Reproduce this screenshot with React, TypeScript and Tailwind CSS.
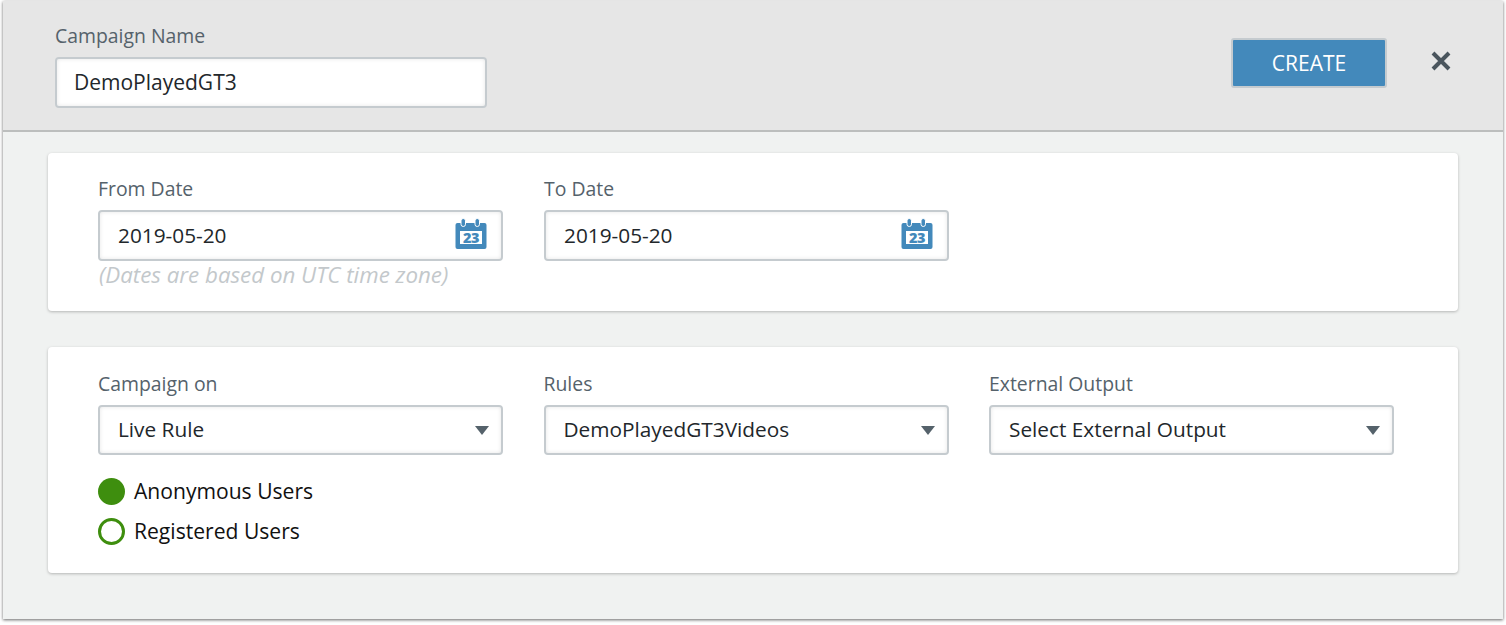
const fieldClass =
  "flex w-[405px] items-center justify-between rounded-[4px] border-2 border-[#c5cbcf] bg-white pl-[18px] text-[20.8px] text-[#22272b] shadow-[inset_0_0_4px_rgba(0,0,0,0.1)]";

const CalendarIcon = () => (
  <svg width="32" height="32" viewBox="0 0 32 32" className="mr-[14px] mt-[-4px]">
    <rect x="0.5" y="5" width="31" height="26" rx="2" fill="#4389bb" />
    <rect x="6" y="0.5" width="4.5" height="8" rx="2.25" fill="#4389bb" stroke="#fff" strokeWidth="1" />
    <rect x="20" y="0.5" width="4.5" height="8" rx="2.25" fill="#4389bb" stroke="#fff" strokeWidth="1" />
    <rect x="5" y="13" width="22" height="13" fill="#fff" />
    <text x="16" y="25" textAnchor="middle" fontSize="14.5" fontWeight="800" letterSpacing="-0.5" fill="#4389bb" fontFamily="'Open Sans', sans-serif">23</text>
  </svg>
);

const DateField = ({ label, value }: { label: string; value: string }) => (
  <div>
    <div className="mb-[9px] text-[19.4px] leading-[25px] text-[#55626b]">{label}</div>
    <div className={`h-[51px] ${fieldClass}`}>
      <span>{value}</span>
      <CalendarIcon />
    </div>
  </div>
);

const SelectField = ({ label, value }: { label: string; value: string }) => (
  <div>
    <div className="mb-[9px] text-[19.4px] leading-[25px] text-[#55626b]">{label}</div>
    <div className={`h-[50px] ${fieldClass}`}>
      <span>{value}</span>
      <svg width="14" height="9" viewBox="0 0 14 9" className="mr-[12px]">
        <path d="M0 0h14L7 9z" fill="#55626b" />
      </svg>
    </div>
  </div>
);

const Radio = ({ label, checked }: { label: string; checked?: boolean }) => (
  <div className="flex h-[40px] items-center gap-[9px] text-[21.1px] text-[#111111]">
    <span
      className={
        checked
          ? "h-[27px] w-[27px] rounded-full bg-[#3e8e0e]"
          : "h-[27px] w-[27px] rounded-full border-[3px] border-[#3e8e0e] bg-white"
      }
    />
    {label}
  </div>
);

export default function App() {
  return (
    <div className="h-[625px] w-[1506px] bg-white font-['Open_Sans',sans-serif]">
      <div className="ml-[3px] w-[1500px] pt-[1px]">
        <div className="h-[618px] bg-[#f0f2f1] shadow-[0_1px_3px_rgba(0,0,0,0.6)]">
          {/* Header */}
          <header className="flex h-[131px] items-start justify-between border-b-2 border-[#bcbebd] bg-[#e6e6e6] pl-[52px]">
            <div className="pt-[22px]">
              <div className="mb-[9px] text-[19.4px] leading-[25px] text-[#55626b]">Campaign Name</div>
              <div className="flex h-[51px] w-[432px] items-center rounded-[4px] border-2 border-[#c5cbcf] bg-white pl-[17px] text-[21px] text-[#22272b] shadow-[inset_0_0_4px_rgba(0,0,0,0.1)]">
                DemoPlayedGT3
              </div>
            </div>
            <div className="flex items-center pr-[51px] pt-[37px]">
              <button className="h-[50px] w-[156px] rounded-[3px] border-2 border-[#c5cbcf] bg-[#4389bb] pt-[1px] text-[21px] text-white">
                CREATE
              </button>
              <svg width="22" height="22" viewBox="0 0 22 22" className="ml-[43px] mt-[-4px]">
                <path d="M3 3l16 16M19 3L3 19" stroke="#4a555d" strokeWidth="4" />
              </svg>
            </div>
          </header>

          {/* Content */}
          <main className="flex flex-col gap-[36px] pl-[45px] pr-[45px] pt-[21px]">
            <section className="h-[158px] rounded-[4px] bg-white pl-[50px] pt-[23px] shadow-[0_1px_3px_rgba(0,0,0,0.25)]">
              <div className="flex gap-[41px]">
                <DateField label="From Date" value="2019-05-20" />
                <DateField label="To Date" value="2019-05-20" />
              </div>
              <div className="pl-[1px] pt-[1px] text-[22.3px] italic leading-[26px] text-[#c3c8cb]">
                (Dates are based on UTC time zone)
              </div>
            </section>

            <section className="h-[226px] rounded-[4px] bg-white pl-[50px] pt-[24px] shadow-[0_1px_3px_rgba(0,0,0,0.25)]">
              <div className="flex gap-[40.5px]">
                <SelectField label="Campaign on" value="Live Rule" />
                <SelectField label="Rules" value="DemoPlayedGT3Videos" />
                <SelectField label="External Output" value="Select External Output" />
              </div>
              <div className="mt-[16px]">
                <Radio label="Anonymous Users" checked />
                <Radio label="Registered Users" />
              </div>
            </section>
          </main>
        </div>
      </div>
    </div>
  );
}
